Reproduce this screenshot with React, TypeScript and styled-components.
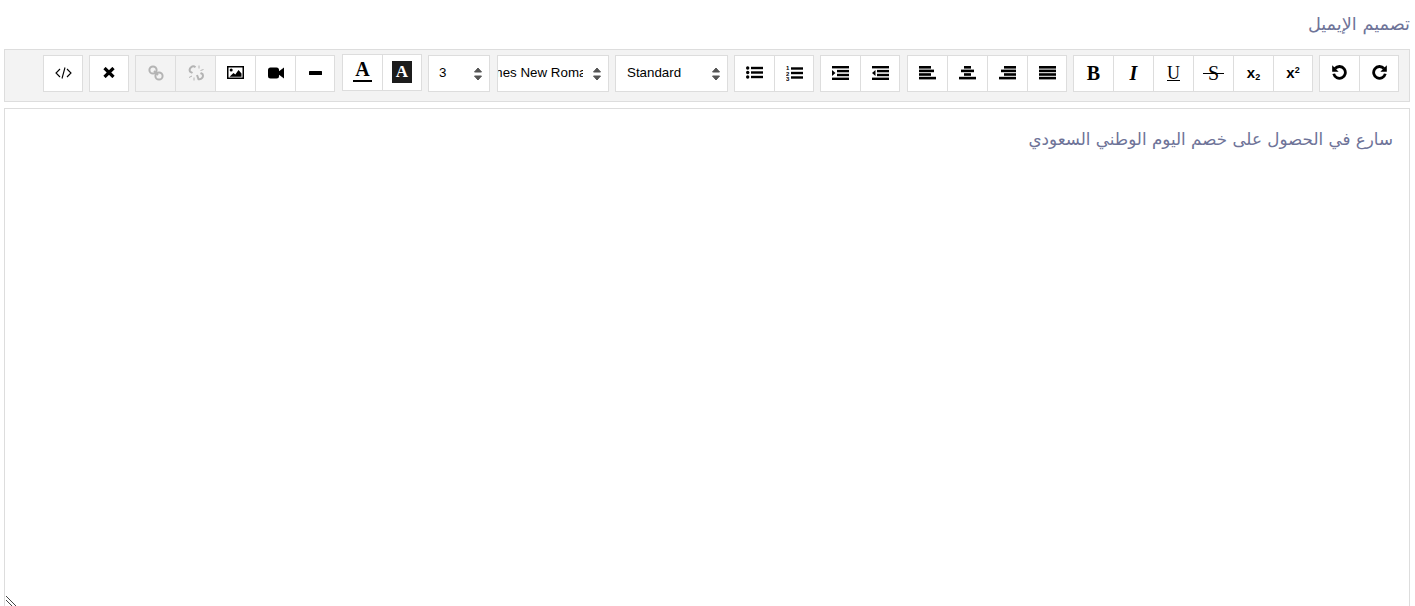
import React from "react";
import styled, { createGlobalStyle } from "styled-components";

const Global = createGlobalStyle`
  html, body { margin: 0; padding: 0; height: 100%; overflow: hidden; background: #fff; }
  body { font-family: "DejaVu Sans", "Liberation Sans", sans-serif; }
`;

const Page = styled.div`
  direction: rtl;
  height: 606px;
  padding: 0 5px 0 4px;
  box-sizing: border-box;
  overflow: hidden;
`;

const Label = styled.label`
  display: block;
  height: 49px;
  padding-top: 12px;
  box-sizing: border-box;
  font-size: 17.7px;
  line-height: 24px;
  color: #6e7398;
`;

const Toolbar = styled.div`
  display: flex;
  gap: 6px;
  height: 53px;
  padding: 5px 10px 0;
  box-sizing: border-box;
  background: #f3f3f3;
  border: 1px solid #ddd;
`;

const Group = styled.div<{ $raised?: boolean; $wide?: boolean }>`
  display: flex;
  height: 37px;
  margin-top: ${(p) => (p.$raised ? "-1px" : "0")};
  margin-left: ${(p) => (p.$wide ? "1px" : "0")};
`;

const Button = styled.button<{ $disabled?: boolean }>`
  width: 40px;
  height: 37px;
  padding: 0 0 2px;
  box-sizing: border-box;
  display: flex;
  align-items: center;
  justify-content: center;
  border: 1px solid #ddd;
  background: ${(p) => (p.$disabled ? "#f3f3f3" : "#fff")};
  color: ${(p) => (p.$disabled ? "#b4b4b4" : "#000")};
  font-size: 16px;
  & + & { border-right: 0; }
`;

const SerifGlyph = styled.span<{ $italic?: boolean; $regular?: boolean; $under?: boolean }>`
  font-family: "Liberation Serif", serif;
  font-weight: ${(p) => (p.$regular ? "normal" : "bold")};
  font-size: ${(p) => (p.$under ? "18px" : "20px")};
  line-height: 1;
  font-style: ${(p) => (p.$italic ? "italic" : "normal")};
  text-decoration: ${(p) => (p.$under ? "underline" : "none")};
`;

const StrikeGlyph = styled.span`
  position: relative;
  font-family: "Liberation Serif", serif;
  font-size: 20px;
  line-height: 1;
  &::after {
    content: "";
    position: absolute;
    left: -5px;
    right: -5px;
    top: 10px;
    height: 1px;
    background: #000;
  }
`;

const ScriptGlyph = styled.span`
  font-family: "Liberation Sans", sans-serif;
  font-weight: bold;
  font-size: 15px;
  direction: ltr;
  sub, sup { font-size: 9px; line-height: 0; font-weight: bold; }
  sub { vertical-align: -2px; }
  sup { vertical-align: 5px; }
`;

const ColorA = styled.span`
  font-family: "Liberation Serif", serif;
  font-weight: bold;
  font-size: 20px;
  line-height: 17px;
  width: 19px;
  text-align: center;
  border-bottom: 2px solid #000;
  padding-bottom: 2px;
`;

const BackA = styled.span`
  font-family: "Liberation Serif", serif;
  font-weight: bold;
  font-size: 17px;
  line-height: 22px;
  width: 20px;
  height: 22px;
  text-align: center;
  background: #1c1c1c;
  color: #fff;
`;

const Select = styled.div<{ $width: number; $pad: number; $wide?: boolean }>`
  position: relative;
  direction: ltr;
  width: ${(p) => p.$width}px;
  height: 37px;
  margin-left: ${(p) => (p.$wide ? "1px" : "0")};
  box-sizing: border-box;
  border: 1px solid #ddd;
  background: #fff;
  font-family: "Liberation Sans", sans-serif;
  font-size: 13.33px;
  line-height: 33px;
  color: #000;
  padding-left: ${(p) => p.$pad}px;
  overflow: hidden;
  white-space: nowrap;
`;

const ClippedValue = styled.div`
  width: 85px;
  overflow: hidden;
  span { display: block; margin-left: -17px; }
`;

const Arrows = styled.svg`
  position: absolute;
  right: 6px;
  top: 11px;
`;

const Editor = styled.div`
  position: relative;
  height: 560px;
  margin-top: 6px;
  box-sizing: border-box;
  border: 1px solid #ddd;
  padding: 18px 16px;
  font-size: 16.75px;
  line-height: 24px;
  color: #6e7398;
`;

const Handle = styled.svg`
  position: absolute;
  left: 0;
  top: 486px;
`;

const CodeIcon = () => (
  <svg width="17" height="14" viewBox="0 0 17 14" fill="none" stroke="#000" strokeWidth="1.1">
    <path d="M5 3 1 7l4 4M12 3l4 4-4 4M10 1.500 7 12.500" />
  </svg>
);

const TimesIcon = () => (
  <svg width="12" height="11" viewBox="0 0 12 11" fill="none" stroke="#000" strokeWidth="3.200">
    <path d="M1.500 1 10.500 10M10.500 1 1.500 10" />
  </svg>
);

const LinkIcon = () => (
  <svg width="16" height="16" viewBox="0 0 16 16" fill="none" stroke="#b4b4b4" strokeWidth="2">
    <circle cx="5" cy="5" r="3.600" />
    <circle cx="11" cy="11" r="3.600" />
    <path d="M6 6l4 4" />
  </svg>
);

const UnlinkIcon = () => (
  <svg width="16" height="16" viewBox="0 0 16 16" fill="none" stroke="#b4b4b4" strokeWidth="2">
    <path d="M7.500 2.200A3.600 3.600 0 0 0 2 6.500L4.500 8" />
    <path d="M9 10l1.500 4.200A3.600 3.600 0 0 0 14.500 9L12.500 8" />
    <path strokeWidth="1" d="M11 .5v3M15.500 4.500l-3 1M1 12.500l3-1.500M6 15.500V12.500" />
  </svg>
);

const ImageIcon = () => (
  <svg width="17" height="13" viewBox="0 0 17 13">
    <rect x=".75" y=".75" width="15.500" height="11.500" fill="#fff" stroke="#000" strokeWidth="1.500" />
    <circle cx="4.200" cy="4" r="1.500" />
    <path d="M2.500 10.800 6.500 7l1.800 1.500L11.500 4l3 3.500v3.300z" />
  </svg>
);

const VideoIcon = () => (
  <svg width="16" height="12" viewBox="0 0 16 12">
    <rect x="0" y=".5" width="11" height="11" rx="2.500" />
    <path d="M10 5 16 .5v11L10 7z" />
  </svg>
);

const MinusIcon = () => (
  <svg width="13" height="4" viewBox="0 0 13 4"><rect width="13" height="4" rx=".5" /></svg>
);

const Bars = ({ rows }: { rows: [number, number][] }) => (
  <svg width="17" height="14" viewBox="0 0 17 14">
    {rows.map(([x, w], i) => (
      <rect key={i} x={x} y={i * 3.600} width={w} height="2.600" />
    ))}
  </svg>
);

const UlIcon = () => (
  <svg width="17" height="13" viewBox="0 0 17 13">
    <circle cx="1.700" cy="2" r="1.700" />
    <circle cx="1.700" cy="6.500" r="1.700" />
    <circle cx="1.700" cy="11" r="1.700" />
    <rect x="5" y=".8" width="12" height="2.400" />
    <rect x="5" y="5.300" width="12" height="2.400" />
    <rect x="5" y="9.800" width="12" height="2.400" />
  </svg>
);

const OlSvg = styled.svg`
  direction: ltr;
`;

const OlText = styled.text`
  font-family: "Liberation Sans", sans-serif;
  font-size: 6px;
  font-weight: bold;
`;

const OlIcon = () => (
  <OlSvg width="17" height="16" viewBox="0 0 17 16">
    <OlText x="0" y="5">1</OlText>
    <OlText x="0" y="10.500">2</OlText>
    <OlText x="0" y="16">3</OlText>
    <rect x="5" y="2.300" width="12" height="2.400" />
    <rect x="5" y="6.800" width="12" height="2.400" />
    <rect x="5" y="11.300" width="12" height="2.400" />
  </OlSvg>
);

const IndentIcon = ({ out }: { out?: boolean }) => (
  <svg width="17" height="14" viewBox="0 0 17 14">
    <rect x="0" y="0" width="17" height="2.400" />
    <rect x="5" y="3.900" width="12" height="2.400" />
    <rect x="5" y="7.800" width="12" height="2.400" />
    <rect x="0" y="11.600" width="17" height="2.400" />
    <path d={out ? "M3.500 4v6L0 7z" : "M0 4v6l3.500-3z"} />
  </svg>
);

const RedoIcon = ({ flip }: { flip?: boolean }) => (
  <svg width="15" height="15" viewBox="0 0 14 14" style={flip ? { transform: "scaleX(-1)" } : undefined}>
    <path d="M11.200 3.300A5.500 5.500 0 1 0 12.400 8.200" fill="none" stroke="#000" strokeWidth="2.600" />
    <path d="M13.800.3v6h-6z" />
  </svg>
);

const SelectArrows = () => (
  <Arrows width="10" height="14" viewBox="0 0 10 14" fill="#555" stroke="#555" strokeLinejoin="round">
    <path d="M5 1 8.500 5H1.500zM5 13 8.500 9H1.500z" />
  </Arrows>
);

export default function App() {
  return (
    <>
      <Global />
      <Page>
        <Label>تصميم الإيميل</Label>
        <Toolbar>
          <Group>
            <Button><RedoIcon /></Button>
            <Button><RedoIcon flip /></Button>
          </Group>
          <Group>
            <Button><ScriptGlyph>x<sup>2</sup></ScriptGlyph></Button>
            <Button><ScriptGlyph>x<sub>2</sub></ScriptGlyph></Button>
            <Button><StrikeGlyph>S</StrikeGlyph></Button>
            <Button><SerifGlyph $regular $under>U</SerifGlyph></Button>
            <Button><SerifGlyph $italic>I</SerifGlyph></Button>
            <Button><SerifGlyph>B</SerifGlyph></Button>
          </Group>
          <Group $wide>
            <Button><Bars rows={[[0, 17], [0, 17], [0, 17], [0, 17]]} /></Button>
            <Button><Bars rows={[[5, 12], [2, 15], [5, 12], [0, 17]]} /></Button>
            <Button><Bars rows={[[5, 7], [2, 13], [5, 7], [0, 17]]} /></Button>
            <Button><Bars rows={[[0, 12], [0, 15], [0, 12], [0, 17]]} /></Button>
          </Group>
          <Group>
            <Button><IndentIcon out /></Button>
            <Button><IndentIcon /></Button>
          </Group>
          <Group>
            <Button><OlIcon /></Button>
            <Button><UlIcon /></Button>
          </Group>
          <Select $width={113} $pad={11}>Standard<SelectArrows /></Select>
          <Select $width={112} $pad={0} $wide>
            <ClippedValue><span>Times New Roman</span></ClippedValue>
            <SelectArrows />
          </Select>
          <Select $width={62} $pad={10}>3<SelectArrows /></Select>
          <Group $raised $wide>
            <Button><BackA>A</BackA></Button>
            <Button><ColorA>A</ColorA></Button>
          </Group>
          <Group>
            <Button><MinusIcon /></Button>
            <Button><VideoIcon /></Button>
            <Button><ImageIcon /></Button>
            <Button $disabled><UnlinkIcon /></Button>
            <Button $disabled><LinkIcon /></Button>
          </Group>
          <Group>
            <Button><TimesIcon /></Button>
          </Group>
          <Group>
            <Button><CodeIcon /></Button>
          </Group>
        </Toolbar>
        <Editor>
          سارع في الحصول على خصم اليوم الوطني السعودي
          <Handle width="14" height="12" viewBox="0 0 14 12" stroke="#444" fill="none">
            <path d="M1 1 12 12M1 5l7 7" />
          </Handle>
        </Editor>
      </Page>
    </>
  );
}
